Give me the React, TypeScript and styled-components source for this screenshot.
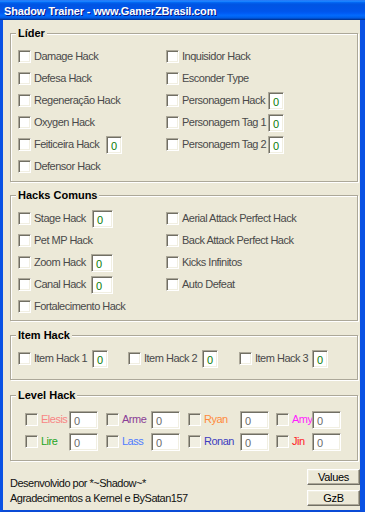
import React from "react";
import styled, { createGlobalStyle } from "styled-components";

const GlobalStyle = createGlobalStyle`
  html, body {
    margin: 0;
    padding: 0;
    background: #ece9d8;
  }
  * {
    box-sizing: border-box;
  }
`;

type Cell = { label: string; field?: number; labelWidth?: number };

const liderLeft: Cell[] = [
  { label: "Damage Hack" },
  { label: "Defesa Hack" },
  { label: "Regeneração Hack" },
  { label: "Oxygen Hack" },
  { label: "Feiticeira Hack", field: 16, labelWidth: 72 },
  { label: "Defensor Hack" },
];

const liderRight: Cell[] = [
  { label: "Inquisidor Hack" },
  { label: "Esconder Type" },
  { label: "Personagem Hack", field: 16, labelWidth: 86 },
  { label: "Personagem Tag 1", field: 16, labelWidth: 86 },
  { label: "Personagem Tag 2", field: 16, labelWidth: 86 },
];

const comunsLeft: Cell[] = [
  { label: "Stage Hack", field: 21, labelWidth: 58 },
  { label: "Pet MP Hack" },
  { label: "Zoom Hack", field: 22, labelWidth: 57 },
  { label: "Canal Hack", field: 22, labelWidth: 57 },
  { label: "Fortalecimento Hack" },
];

const comunsRight: Cell[] = [
  { label: "Aerial Attack Perfect Hack" },
  { label: "Back Attack Perfect Hack" },
  { label: "Kicks Infinitos" },
  { label: "Auto Defeat" },
];

const items: Cell[] = [
  { label: "Item Hack 1", field: 16, labelWidth: 58 },
  { label: "Item Hack 2", field: 16, labelWidth: 58 },
  { label: "Item Hack 3", field: 16, labelWidth: 57 },
];

// width of each label column in the level grid
const levelLabelWidths = [28, 29, 36, 20];
const levels = [
  { name: "Elesis", color: "#f88585" },
  { name: "Arme", color: "#8a3d96" },
  { name: "Ryan", color: "#ff8a3c" },
  { name: "Amy", color: "#ff1cff" },
  { name: "Lire", color: "#1fa51f" },
  { name: "Lass", color: "#4f7cff" },
  { name: "Ronan", color: "#3d3dc0" },
  { name: "Jin", color: "#ff2222" },
];

function CheckRow({ cell }: { cell: Cell }) {
  return (
    <Row>
      <CheckBox />
      <Label $w={cell.labelWidth}>{cell.label}</Label>
      {cell.field ? <Field $w={cell.field}>0</Field> : null}
    </Row>
  );
}

export default function App() {
  return (
    <>
      <GlobalStyle />
      <Window>
        <TitleBar>Shadow Trainer - www.GamerZBrasil.com</TitleBar>
        <Frame>
          <Content>
            <Group $pt={5} $pb={4}>
              <Legend>Líder</Legend>
              <Columns>
                <Column>
                  {liderLeft.map((c) => (
                    <CheckRow key={c.label} cell={c} />
                  ))}
                </Column>
                <Column>
                  {liderRight.map((c) => (
                    <CheckRow key={c.label} cell={c} />
                  ))}
                </Column>
              </Columns>
            </Group>

            <Group $mt={7} $pt={5} $pb={3}>
              <Legend>Hacks Comuns</Legend>
              <Columns>
                <Column>
                  {comunsLeft.map((c) => (
                    <CheckRow key={c.label} cell={c} />
                  ))}
                </Column>
                <Column>
                  {comunsRight.map((c) => (
                    <CheckRow key={c.label} cell={c} />
                  ))}
                </Column>
              </Columns>
            </Group>

            <Group $mt={8} $pt={5} $pb={10}>
              <Legend>Item Hack</Legend>
              <ItemGrid>
                {items.map((c) => (
                  <CheckRow key={c.label} cell={c} />
                ))}
              </ItemGrid>
            </Group>

            <Group $mt={9} $pt={6} $pb={8}>
              <Legend>Level Hack</Legend>
              <LevelGrid>
                {levels.map((l, i) => (
                  <Row key={l.name}>
                    <CheckBox $disabled />
                    <Label $w={levelLabelWidths[i % 4]} $color={l.color}>
                      {l.name}
                    </Label>
                    <Field $w={29} $muted>
                      0
                    </Field>
                  </Row>
                ))}
              </LevelGrid>
            </Group>

            <Footer>
              <Credits>
                <div>Desenvolvido por *~Shadow~*</div>
                <div>Agradecimentos a Kernel e BySatan157</div>
              </Credits>
              <Buttons>
                <Button>Values</Button>
                <Button>GzB</Button>
              </Buttons>
            </Footer>
          </Content>
        </Frame>
      </Window>
    </>
  );
}

const Window = styled.div`
  width: 365px;
  height: 512px;
  display: flex;
  flex-direction: column;
  overflow: hidden;
`;

const TitleBar = styled.div`
  height: 20px;
  flex-shrink: 0;
  padding: 2px 0 0 4px;
  display: flex;
  align-items: center;
  color: #fff;
  font-family: "Liberation Sans", Arial, sans-serif;
  font-size: 11px;
  font-weight: 700;
  letter-spacing: -0.15px;
  text-shadow: 1px 1px 0 #0a1883;
  white-space: nowrap;
  background: linear-gradient(
    to bottom,
    #0058ee 0%,
    #3a93ff 4%,
    #288eff 6%,
    #127dff 8%,
    #036ffc 10%,
    #0262ee 14%,
    #0057e5 20%,
    #0054e3 24%,
    #0055eb 56%,
    #005bf5 66%,
    #026afe 76%,
    #0062ef 86%,
    #0052d6 92%,
    #0040ab 94%,
    #003092 100%
  );
`;

const Frame = styled.div`
  flex: 1;
  display: flex;
  border-left: 3px solid #0a52e4;
  border-right: 6px solid #0a52e4;
  border-bottom: 2px solid #0a4bd6;
`;

const Content = styled.div`
  flex: 1;
  display: flex;
  flex-direction: column;
  padding: 7px 2px 0 7px;
  background: #ece9d8;
  font-family: "Liberation Sans", Arial, sans-serif;
  font-size: 11px;
`;

const Group = styled.fieldset<{ $mt?: number; $pt: number; $pb: number }>`
  margin: ${(p) => p.$mt ?? 0}px 0 0 0;
  padding: ${(p) => p.$pt}px 0 ${(p) => p.$pb}px 7px;
  min-width: 0;
  width: 348px;
  border: 1px solid #aca899;
  box-shadow: inset 1px 1px 0 #fff, 1px 1px 0 #fff;
`;

const Legend = styled.legend`
  padding: 0 2px;
  margin-left: -2px;
  font-family: "Liberation Sans", Arial, sans-serif;
  font-size: 11px;
  line-height: 13px;
  font-weight: 700;
  color: #000;
  background: #ece9d8;
`;

const Columns = styled.div`
  display: grid;
  grid-template-columns: 148px 1fr;
`;

const Column = styled.div`
  display: flex;
  flex-direction: column;
`;

const ItemGrid = styled.div`
  display: grid;
  grid-template-columns: 110px 111px 1fr;
`;

const LevelGrid = styled.div`
  display: grid;
  grid-template-columns: 81px 82px 88px 1fr;
  margin-left: 7px;
`;

const Row = styled.div`
  height: 22px;
  display: flex;
  align-items: center;
`;

const CheckBox = styled.span<{ $disabled?: boolean }>`
  width: 13px;
  height: 13px;
  flex-shrink: 0;
  background: ${(p) => (p.$disabled ? "#f1efe2" : "#fff")};
  border: 1px solid;
  border-color: #aca899 #fff #fff #aca899;
  box-shadow: inset 1px 1px 0 #716f64, inset -1px -1px 0 #f1efe2;
`;

const Label = styled.span<{ $w?: number; $color?: string }>`
  margin-left: 3px;
  width: ${(p) => (p.$w ? `${p.$w}px` : "auto")};
  flex-shrink: 0;
  color: ${(p) => p.$color ?? "#4a4a4a"};
  font-size: 11px;
  line-height: 13px;
  letter-spacing: -0.5px;
  white-space: nowrap;
`;

const Field = styled.span<{ $w: number; $muted?: boolean }>`
  width: ${(p) => p.$w}px;
  height: 18px;
  margin-top: 2px;
  flex-shrink: 0;
  display: flex;
  align-items: center;
  padding: 2px 0 0 4px;
  background: #fff;
  border: 1px solid;
  border-color: #aca899 #fff #fff #aca899;
  box-shadow: inset 1px 1px 0 #716f64, inset -1px -1px 0 #f1efe2;
  color: ${(p) => (p.$muted ? "#6a6a6a" : "#0a7a0a")};
  font-size: 11px;
  line-height: 13px;
`;

const Footer = styled.div`
  display: flex;
  justify-content: space-between;
  padding-top: 8px;
  margin-right: -2px;
`;

const Credits = styled.div`
  padding-top: 7px;
  color: #111;
  font-size: 11px;
  line-height: 15px;
  letter-spacing: -0.5px;
  white-space: nowrap;
`;

const Buttons = styled.div`
  display: flex;
  flex-direction: column;
  gap: 5px;
`;

const Button = styled.button`
  width: 53px;
  height: 16px;
  padding: 0;
  background: #ece9d8;
  border: 1px solid;
  border-color: #fff #716f64 #716f64 #fff;
  box-shadow: inset -1px -1px 0 #aca899, inset 1px 1px 0 #f1efe2;
  color: #000;
  font-family: "Liberation Sans", Arial, sans-serif;
  font-size: 11px;
  line-height: 13px;
  letter-spacing: -0.3px;
`;
